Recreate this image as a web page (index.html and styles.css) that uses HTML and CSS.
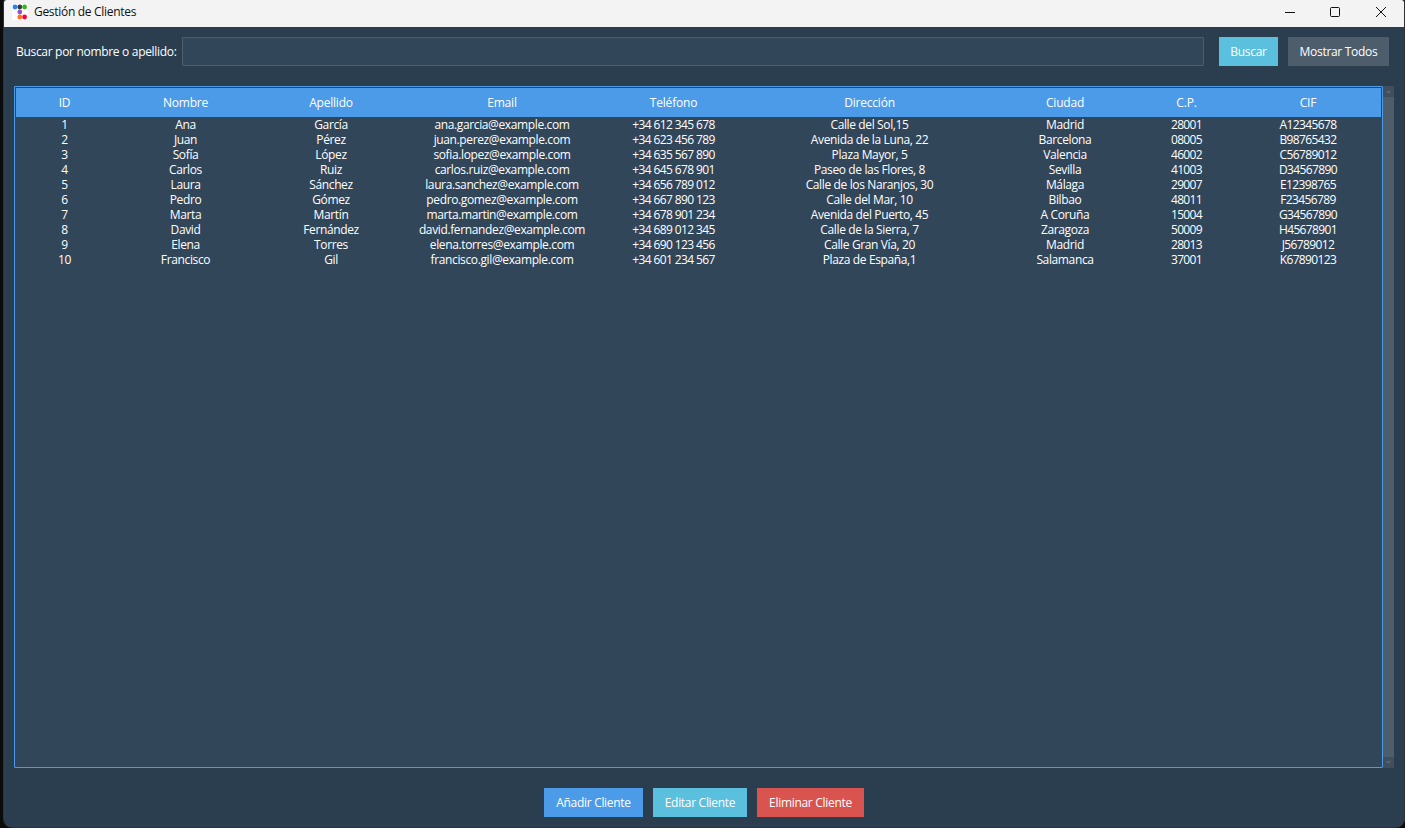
FILE: index.html
```html
<!DOCTYPE html>
<html lang="es">
<head>
<meta charset="utf-8">
<title>Gestión de Clientes</title>
<link rel="stylesheet" href="styles.css">
</head>
<body>
<div class="window">
  <header class="titlebar">
    <svg class="app-icon" width="16" height="16" viewBox="0 0 16 16">
      <rect width="16" height="16" rx="1" fill="#fff"/>
      <circle cx="3" cy="3" r="2.4" fill="#2f80e8"/><circle cx="7.8" cy="3" r="2.4" fill="#34383f"/><circle cx="12.6" cy="3" r="2.4" fill="#38b516"/>
      <circle cx="7.8" cy="8" r="2.4" fill="#9656be"/><circle cx="7.8" cy="13" r="2.4" fill="#ff7518"/><circle cx="12.6" cy="13" r="2.4" fill="#fb043b"/>
    </svg>
    <h1 class="title">Gestión de Clientes</h1>
    <svg class="controls" width="104" height="12" viewBox="0 0 104 12" fill="none" stroke="#111">
      <path d="M0 6.5h10"/>
      <rect x="45.5" y="1.5" width="9" height="9" rx="1"/>
      <path d="M91 1l10 10M101 1L91 11"/>
    </svg>
  </header>
  <div class="search">
    <label class="search-label" for="q">Buscar por nombre o apellido:</label>
    <input class="search-input" id="q" type="text">
    <button class="btn info find">Buscar</button>
    <button class="btn secondary all">Mostrar Todos</button>
  </div>
  <main class="content">
    <div class="table-frame">
      <table class="grid">
        <colgroup><col class="c-s"><col class="c-name"><col class="c-m"><col class="c-email"><col class="c-tel"><col class="c-dir"><col class="c-m"><col class="c-s"><col class="c-m"></colgroup>
        <thead><tr><th>ID</th><th>Nombre</th><th>Apellido</th><th>Email</th><th>Teléfono</th><th>Dirección</th><th>Ciudad</th><th>C.P.</th><th>CIF</th></tr></thead>
        <tbody>
          <tr><td>1</td><td>Ana</td><td>García</td><td>ana.garcia@example.com</td><td class="num">+34 612 345 678</td><td>Calle del Sol,15</td><td>Madrid</td><td class="num">28001</td><td class="num">A12345678</td></tr>
          <tr><td>2</td><td>Juan</td><td>Pérez</td><td>juan.perez@example.com</td><td class="num">+34 623 456 789</td><td>Avenida de la Luna, 22</td><td>Barcelona</td><td class="num">08005</td><td class="num">B98765432</td></tr>
          <tr><td>3</td><td>Sofía</td><td>López</td><td>sofia.lopez@example.com</td><td class="num">+34 635 567 890</td><td>Plaza Mayor, 5</td><td>Valencia</td><td class="num">46002</td><td class="num">C56789012</td></tr>
          <tr><td>4</td><td>Carlos</td><td>Ruiz</td><td>carlos.ruiz@example.com</td><td class="num">+34 645 678 901</td><td>Paseo de las Flores, 8</td><td>Sevilla</td><td class="num">41003</td><td class="num">D34567890</td></tr>
          <tr><td>5</td><td>Laura</td><td>Sánchez</td><td>laura.sanchez@example.com</td><td class="num">+34 656 789 012</td><td>Calle de los Naranjos, 30</td><td>Málaga</td><td class="num">29007</td><td class="num">E12398765</td></tr>
          <tr><td>6</td><td>Pedro</td><td>Gómez</td><td>pedro.gomez@example.com</td><td class="num">+34 667 890 123</td><td>Calle del Mar, 10</td><td>Bilbao</td><td class="num">48011</td><td class="num">F23456789</td></tr>
          <tr><td>7</td><td>Marta</td><td>Martín</td><td>marta.martin@example.com</td><td class="num">+34 678 901 234</td><td>Avenida del Puerto, 45</td><td>A Coruña</td><td class="num">15004</td><td class="num">G34567890</td></tr>
          <tr><td>8</td><td>David</td><td>Fernández</td><td>david.fernandez@example.com</td><td class="num">+34 689 012 345</td><td>Calle de la Sierra, 7</td><td>Zaragoza</td><td class="num">50009</td><td class="num">H45678901</td></tr>
          <tr><td>9</td><td>Elena</td><td>Torres</td><td>elena.torres@example.com</td><td class="num">+34 690 123 456</td><td>Calle Gran Vía, 20</td><td>Madrid</td><td class="num">28013</td><td class="num">J56789012</td></tr>
          <tr><td>10</td><td>Francisco</td><td>Gil</td><td>francisco.gil@example.com</td><td class="num">+34 601 234 567</td><td>Plaza de España,1</td><td>Salamanca</td><td class="num">37001</td><td class="num">K67890123</td></tr>
        </tbody>
      </table>
    </div>
    <div class="scrollbar">
      <svg class="arrow" width="11" height="11" viewBox="0 0 11 11"><path d="M3 7V6h1V5h1V4h1v1h1v1h1v1z" fill="#56626d"/></svg>
      <svg class="arrow" width="11" height="11" viewBox="0 0 11 11"><path d="M3 4h5v1H7v1H6v1H5V6H4V5H3z" fill="#56626d"/></svg>
    </div>
  </main>
  <footer class="actions">
    <button class="btn primary add">Añadir Cliente</button>
    <button class="btn info edit">Editar Cliente</button>
    <button class="btn danger delete">Eliminar Cliente</button>
  </footer>
</div>
</body>
</html>
```
FILE: styles.css
```css
* { box-sizing: border-box; }
body {
  margin: 0;
  height: 828px;
  padding: 0 1px 1px 4px;
  background: #0b0b0c;
  overflow: hidden;
  font: 12px/15px "Open Sans", "Noto Sans", sans-serif;
}
.window {
  height: 827px;
  display: flex;
  flex-direction: column;
  background: #2b3e50;
  border-radius: 3px 3px 8px 8px;
  box-shadow: 0 0 0 1px #303234;
  overflow: hidden;
}
.titlebar {
  height: 27px;
  flex: none;
  display: flex;
  align-items: center;
  padding: 0 15px 4px 8px;
  background: #f3f3f3;
  color: #111;
}
.title { margin: 0 auto 0 6px; font: inherit; letter-spacing: -.3px; }
.search {
  height: 59px;
  flex: none;
  display: flex;
  align-items: flex-start;
  padding: 10px 15px 0 12px;
}
.search-label { width: 166px; line-height: 29px; color: #fff; white-space: nowrap; letter-spacing: -.31px; }
.search-input {
  width: 1022px;
  height: 29px;
  margin-right: 15px;
  background: #32465a;
  border: 1px solid #4e5d6c;
  border-radius: 1px;
  outline: 0;
}
.btn {
  height: 29px;
  padding: 0;
  border: 0;
  color: #fff;
  font: inherit;
  letter-spacing: -.3px;
  white-space: nowrap;
}
.find { width: 59px; margin-right: 10px; }
.all { width: 101px; }
.primary { background: #4c9be8; }
.info { background: #5bc0de; }
.secondary { background: #4e5d6c; }
.danger { background: #d9534f; }
.content { display: flex; height: 682px; padding: 0 10px; }
.table-frame {
  width: 1369px;
  padding: 1px;
  background: #32465a;
  border: 1px solid #4c9be8;
  border-radius: 1px;
}
.grid { width: 1365px; table-layout: fixed; border-collapse: collapse; color: #fff; text-align: center; }
.c-s { width: 97px; }
.c-m { width: 146px; }
.c-name { width: 145px; }
.c-email { width: 196px; }
.c-tel { width: 147px; }
.c-dir { width: 245px; }
.grid th { height: 29px; padding: 0; background: #4c9be8; font-weight: 400; letter-spacing: -.2px; }
.grid td { height: 15px; padding: 0; white-space: nowrap; letter-spacing: -.37px; }
.grid td.num { letter-spacing: -.62px; }
.scrollbar {
  width: 11px;
  display: flex;
  flex-direction: column;
  justify-content: space-between;
  background: #4e5d6c;
}
.arrow { background: #414e5b; }
.actions { display: flex; gap: 10px; padding: 20px 0 0 540px; }
.add { width: 99px; }
.edit { width: 94px; }
.delete { width: 107px; }
```
